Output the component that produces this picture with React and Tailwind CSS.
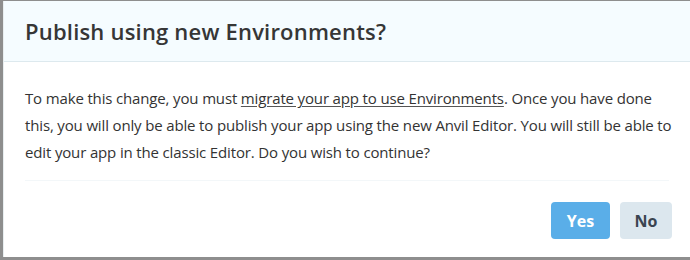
export default function App() {
  return (
    <div className="w-[690px] h-[260px] bg-[#8e8e8e] pt-[1px] pl-[3px] pb-[3px] overflow-hidden" style={{ fontFamily: '"Open Sans", sans-serif' }}>
      <div className="h-full bg-white flex flex-col border-l border-[#e8eef0]">
        <div className="h-[61px] bg-[#f5fcff] border-b border-[#dde9ee] flex items-center pl-[21px] shrink-0">
          <h1 className="text-[22px] font-semibold text-[#363636] tracking-[0.2px]">Publish using new Environments?</h1>
        </div>
        <div className="px-[21px] pt-[23px]">
          <p className="text-[15px] leading-[27px] text-[#333333] whitespace-nowrap tracking-[-0.15px]">
            To make this change, you must <span className="underline underline-offset-2 decoration-[#555]">migrate your app to use Environments</span>. Once you have done<br />
            this, you will only be able to publish your app using the new Anvil Editor. You will still be able to<br />
            edit your app in the classic Editor. Do you wish to continue?
          </p>
        </div>
        <div className="mx-[21px] mt-[14px] border-t border-[#f3f7f9]"></div>
        <div className="flex justify-end gap-[10px] pr-[18px] pt-[21px]">
          <button className="w-[59px] h-[37px] rounded-[4px] bg-[#5aaee8] text-white text-[16px] font-bold">Yes</button>
          <button className="w-[52px] h-[37px] rounded-[4px] bg-[#dce7ee] text-[#3a4450] text-[16px] font-bold">No</button>
        </div>
      </div>
    </div>
  );
}
